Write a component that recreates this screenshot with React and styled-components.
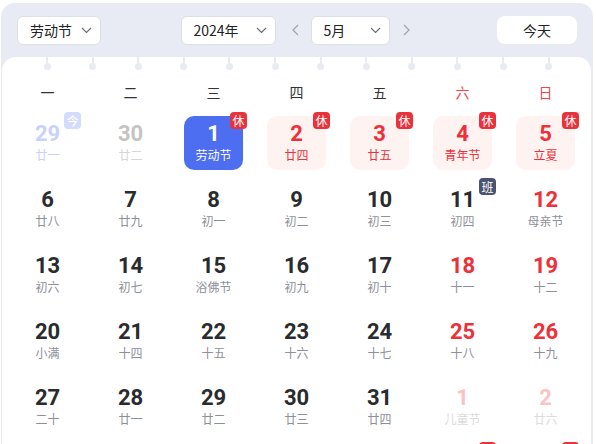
import React from "react";
import styled, { createGlobalStyle } from "styled-components";

const GlobalStyle = createGlobalStyle`
  html, body {
    margin: 0;
    padding: 0;
    overflow: hidden;
    background: #ffffff;
  }
  body {
    font-family: "Noto Sans CJK SC", "Noto Sans", sans-serif;
  }
`;

const Page = styled.div`
  padding: 3px 3px 0 1px;
`;

const Panel = styled.div`
  background: #e8ebf3;
  border-radius: 14px 14px 0 0;
  padding: 0 2px 0 1px;
`;

const Header = styled.div`
  height: 54px;
  display: grid;
  grid-template-columns: 1fr auto 1fr;
  align-items: center;
  padding: 0 14px 0 15px;
`;

const Center = styled.div`
  display: flex;
  align-items: center;
`;

const Select = styled.div`
  width: ${(p) => p.$w}px;
  height: 29px;
  box-sizing: border-box;
  background: #fff;
  border: 1px solid #dcdfe6;
  border-radius: 6px;
  display: flex;
  align-items: center;
  justify-content: space-between;
  padding: 0 8px 0 12px;
  font-size: 14px;
  color: #222;
`;

const Arrow = styled.div`
  width: 14px;
  height: 29px;
  display: flex;
  align-items: center;
  justify-content: center;
  margin: ${(p) => p.$m};
`;

const TodayBtn = styled.div`
  justify-self: end;
  width: 80px;
  height: 28px;
  background: #fff;
  border-radius: 8px;
  display: flex;
  align-items: center;
  justify-content: center;
  font-size: 14px;
  color: #222;
`;

const Card = styled.div`
  background: #fff;
  border-radius: 14px 14px 0 0;
  padding: 0 4px 0 4px;
`;

const Rings = styled.div`
  display: flex;
  gap: 38.6px;
  padding-left: 37.6px;
  height: 13px;
`;

const Ring = styled.div`
  width: 7px;
  display: flex;
  flex-direction: column;
  align-items: center;
  &::before {
    content: "";
    width: 2px;
    height: 6px;
    background: #e8ebf3;
  }
  &::after {
    content: "";
    width: 7px;
    height: 7px;
    border-radius: 50%;
    background: #e8ebf3;
  }
`;

const Grid = styled.div`
  display: grid;
  grid-template-columns: repeat(7, 1fr);
  row-gap: 12px;
`;

const WeekDay = styled.div`
  height: 20px;
  margin: 12px 0 2px;
  text-align: center;
  font-size: 14px;
  line-height: 20px;
  color: ${(p) => (p.$weekend ? "#f2454d" : "#333")};
`;

const Cell = styled.div`
  display: flex;
  justify-content: center;
`;

const Box = styled.div`
  position: relative;
  width: 59px;
  height: 54px;
  border-radius: 10px;
  background: ${(p) => p.$bg};
  display: flex;
  flex-direction: column;
  align-items: center;
  justify-content: center;
`;

const Num = styled.div`
  font-family: Roboto, "Liberation Sans", sans-serif;
  font-weight: 700;
  font-size: 22px;
  line-height: 24px;
  margin-top: -2px;
  color: ${(p) => p.$c};
`;

const Lunar = styled.div`
  font-size: 12px;
  line-height: 16px;
  margin-top: 1px;
  color: ${(p) => p.$c};
  white-space: nowrap;
`;

const Badge = styled.div`
  position: absolute;
  top: -4px;
  right: -4px;
  width: 17px;
  height: 17px;
  border-radius: 4px;
  background: ${(p) => p.$bg};
  color: #fff;
  font-size: 12px;
  line-height: 17px;
  text-align: center;
`;

const Chevron = () => (
  <svg width="11" height="7" viewBox="0 0 11 7">
    <polyline points="1,1 5.5,5.5 10,1" fill="none" stroke="#6b6f7a" strokeWidth="1.2" />
  </svg>
);

const Side = ({ dir }) => (
  <svg width="7" height="12" viewBox="0 0 7 12">
    <polyline
      points={dir === "l" ? "6,1 1,6 6,11" : "1,1 6,6 1,11"}
      fill="none"
      stroke="#a0a4ad"
      strokeWidth="1.3"
    />
  </svg>
);

const weekdays = ["一", "二", "三", "四", "五", "六", "日"];

// kind: prev, today, sel, hol, next
const days = [
  { n: 29, l: "廿一", k: "today", b: "今" },
  { n: 30, l: "廿二", k: "prev" },
  { n: 1, l: "劳动节", k: "sel", b: "休" },
  { n: 2, l: "廿四", k: "hol", b: "休" },
  { n: 3, l: "廿五", k: "hol", b: "休" },
  { n: 4, l: "青年节", k: "hol", b: "休" },
  { n: 5, l: "立夏", k: "hol", b: "休" },
  { n: 6, l: "廿八" },
  { n: 7, l: "廿九" },
  { n: 8, l: "初一" },
  { n: 9, l: "初二" },
  { n: 10, l: "初三" },
  { n: 11, l: "初四", b: "班" },
  { n: 12, l: "母亲节", red: true },
  { n: 13, l: "初六" },
  { n: 14, l: "初七" },
  { n: 15, l: "浴佛节" },
  { n: 16, l: "初九" },
  { n: 17, l: "初十" },
  { n: 18, l: "十一", red: true },
  { n: 19, l: "十二", red: true },
  { n: 20, l: "小满" },
  { n: 21, l: "十四" },
  { n: 22, l: "十五" },
  { n: 23, l: "十六" },
  { n: 24, l: "十七" },
  { n: 25, l: "十八", red: true },
  { n: 26, l: "十九", red: true },
  { n: 27, l: "二十" },
  { n: 28, l: "廿一" },
  { n: 29, l: "廿二" },
  { n: 30, l: "廿三" },
  { n: 31, l: "廿四" },
  { n: 1, l: "儿童节", k: "next" },
  { n: 2, l: "廿六", k: "next" },
  { n: 3, l: "廿七", k: "next" },
  { n: 4, l: "廿八", k: "next" },
  { n: 5, l: "芒种", k: "next" },
  { n: 6, l: "初一", k: "next" },
  { n: 7, l: "初二", k: "next" },
  { n: 8, l: "初三", k: "nextHol", b: "休" },
  { n: 9, l: "初四", k: "nextHol", b: "休" },
];

const style = (d) => {
  switch (d.k) {
    case "today":
      return { bg: "transparent", num: "#c8d2fa", lun: "#c8d2fa", badge: "#d4dcfb" };
    case "prev":
      return { bg: "transparent", num: "#c4c4c4", lun: "#d6d6d6" };
    case "sel":
      return { bg: "#4e6ef2", num: "#fff", lun: "#fff", badge: "#e8323c" };
    case "hol":
      return { bg: "#fff3f2", num: "#ee3038", lun: "#ee3038", badge: "#e8323c" };
    case "next":
      return { bg: "transparent", num: "#fbc3c3", lun: "#dcdcdc" };
    case "nextHol":
      return { bg: "#fff8f7", num: "#fbc3c3", lun: "#fbc3c3", badge: "#e8323c" };
    default:
      return {
        bg: "transparent",
        num: d.red ? "#ee3038" : "#2a2b2e",
        lun: "#8d9099",
        badge: "#4a5470",
      };
  }
};

export default function App() {
  return (
    <Page>
      <GlobalStyle />
      <Panel>
        <Header>
          <Select $w={84}>
            劳动节 <Chevron />
          </Select>
          <Center>
            <Select $w={95}>
              2024年 <Chevron />
            </Select>
            <Arrow $m="0 8px 0 13px">
              <Side dir="l" />
            </Arrow>
            <Select $w={79}>
              5月 <Chevron />
            </Select>
            <Arrow $m="0 0 0 10px">
              <Side dir="r" />
            </Arrow>
          </Center>
          <TodayBtn>今天</TodayBtn>
        </Header>
        <Card>
          <Rings>
            {Array.from({ length: 12 }).map((_, i) => (
              <Ring key={i} />
            ))}
          </Rings>
          <Grid>
            {weekdays.map((w, i) => (
              <WeekDay key={w} $weekend={i > 4}>
                {w}
              </WeekDay>
            ))}
            {days.map((d, i) => {
              const s = style(d);
              return (
                <Cell key={i}>
                  <Box $bg={s.bg}>
                    <Num $c={s.num}>{d.n}</Num>
                    <Lunar $c={s.lun}>{d.l}</Lunar>
                    {d.b && <Badge $bg={s.badge}>{d.b}</Badge>}
                  </Box>
                </Cell>
              );
            })}
          </Grid>
        </Card>
      </Panel>
    </Page>
  );
}
